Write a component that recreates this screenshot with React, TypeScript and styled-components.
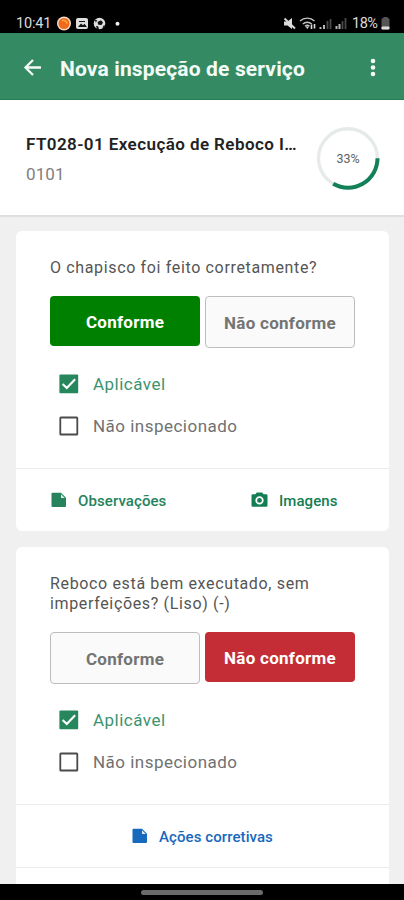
import React from "react";
import styled, { createGlobalStyle } from "styled-components";

const GlobalStyle = createGlobalStyle`
  *, *::before, *::after { box-sizing: border-box; }
  body { margin: 0; background: #f0f0f0; font-family: Roboto, "Liberation Sans", sans-serif; }
  button { font: inherit; border: 0; background: none; padding: 0; }
`;

const Screen = styled.div`
  width: 404px;
  height: 900px;
  display: flex;
  flex-direction: column;
  overflow: hidden;
  background: #f0f0f0;
`;

const StatusBar = styled.div`
  flex: none;
  height: 33px;
  padding: 12px 14px 0 16px;
  display: flex;
  justify-content: space-between;
  background: #000;
  color: #dcdcdc;
`;

const StatusGroup = styled.div<{ $gap: number }>`
  height: 22px;
  display: flex;
  align-items: center;
  gap: ${(p) => p.$gap}px;
  svg { display: block; }
`;

const Clock = styled.span`
  width: 35px;
  margin-right: 1px;
  font-size: 14.5px;
  letter-spacing: -0.2px;
  white-space: nowrap;
`;

const Battery = styled.span`
  width: 27px;
  margin-left: 1px;
  font-size: 14.5px;
  letter-spacing: -0.5px;
  white-space: nowrap;
`;

const AppBar = styled.header`
  flex: none;
  height: 67px;
  padding: 4px 21px 0 20px;
  display: flex;
  align-items: center;
  background: #348b63;
  border-bottom: 1px solid #2a7b56;
  color: #f4fbf7;
  svg { display: block; }
`;

const Title = styled.h1`
  flex: 1;
  margin: 1px 0 0 14px;
  font-size: 21px;
  line-height: 26px;
  font-weight: 700;
  letter-spacing: 0.15px;
  white-space: nowrap;
`;

const Summary = styled.section`
  flex: none;
  height: 117px;
  padding: 26px 24px 0 26px;
  display: flex;
  justify-content: space-between;
  background: #fff;
  border-bottom: 2px solid #dedfdf;
`;

const ServiceName = styled.div`
  margin-top: 8px;
  font-size: 17px;
  line-height: 20px;
  font-weight: 600;
  letter-spacing: 0.42px;
  color: #222;
  white-space: nowrap;
`;

const ServiceCode = styled.div`
  margin-top: 10px;
  font-size: 17px;
  line-height: 20px;
  letter-spacing: 0.1px;
  color: #808080;
`;

const Cards = styled.main`
  flex: 1;
  min-height: 0;
  overflow: hidden;
  padding: 14px 15px 0 16px;
  display: flex;
  flex-direction: column;
  gap: 16px;
`;

const Card = styled.article<{ $open?: boolean }>`
  flex: none;
  background: #fff;
  border-radius: ${(p) => (p.$open ? "6px 6px 0 0" : "6px")};
  min-height: ${(p) => (p.$open ? "350px" : "0")};
`;

const CardBody = styled.div<{ $height: number }>`
  height: ${(p) => p.$height}px;
  padding: 27px 34px 0;
`;

const Question = styled.p`
  margin: 0 -10px 18px 0;
  font-size: 16px;
  line-height: 20px;
  letter-spacing: 0.65px;
  color: #555;
`;

const Choices = styled.div`
  height: 52px;
  display: grid;
  grid-template-columns: 150px 150px;
  column-gap: 5px;
  align-items: start;
`;

type Tone = "green" | "red" | "plain";
const fills: Record<Tone, string> = { green: "#008000", red: "#c42d36", plain: "#fafafa" };

const Choice = styled.button<{ $tone: Tone }>`
  height: ${(p) => (p.$tone === "plain" ? 52 : 50)}px;
  padding-top: 1px;
  border-radius: 4px;
  border: ${(p) => (p.$tone === "plain" ? "1px solid #bdbdbd" : "0")};
  background: ${(p) => fills[p.$tone]};
  color: ${(p) => (p.$tone === "plain" ? "#747474" : "#fff")};
  font-size: 17px;
  font-weight: 700;
  letter-spacing: 0.27px;
`;

const CheckRow = styled.label<{ $on?: boolean }>`
  height: 42px;
  padding-left: 9px;
  display: flex;
  align-items: center;
  gap: 14px;
  font-size: 17px;
  letter-spacing: 0.48px;
  color: ${(p) => (p.$on ? "#3c9470" : "#717171")};
  svg { display: block; flex: none; }
`;

const Checks = styled.div`
  margin-top: 15px;
`;

const Actions = styled.div<{ $columns: number }>`
  height: 63px;
  padding-right: ${(p) => (p.$columns === 2 ? 2 : 0)}px;
  display: grid;
  grid-template-columns: repeat(${(p) => p.$columns}, 1fr);
  border-top: 1px solid #e9ecec;
`;

const Action = styled.button<{ $color: string }>`
  padding-top: 2px;
  display: flex;
  align-items: center;
  justify-content: center;
  gap: 11px;
  color: ${(p) => p.$color};
  font-size: 15px;
  font-weight: 500;
  letter-spacing: 0.08px;
  white-space: nowrap;
  svg { display: block; flex: none; margin-top: -2px; }
`;

const NavBar = styled.footer`
  flex: none;
  height: 16px;
  padding-top: 6px;
  display: flex;
  justify-content: center;
  background: #000;
`;

const Handle = styled.div`
  width: 122px;
  height: 5px;
  border-radius: 3px;
  background: #6b6b6b;
`;

const NoteIcon = () => (
  <svg width="16" height="16" viewBox="0 0 16 16">
    <path d="M1.5 .7H10l5 5V14a1 1 0 0 1-1 1H1.5a1 1 0 0 1-1-1V1.7a1 1 0 0 1 1-1Z" fill="currentColor" />
    <path d="M10 2.2V6h3.8Z" fill="#fff" opacity=".85" />
  </svg>
);

const CameraIcon = () => (
  <svg width="17" height="16" viewBox="0 0 17 16">
    <path
      fill="currentColor"
      d="M5.8.6h5.4l1.4 1.6h2.6a1.3 1.3 0 0 1 1.3 1.3v10a1.3 1.3 0 0 1-1.3 1.3H1.8A1.3 1.3 0 0 1 .5 13.500v-10a1.300 1.300 0 0 1 1.300-1.300h2.600Z"
    />
    <circle cx="8.500" cy="8.400" r="3.300" fill="none" stroke="#fff" strokeWidth="1.700" />
  </svg>
);

const CheckIcon = ({ on }: { on?: boolean }) => (
  <svg width="20" height="20" viewBox="0 0 20 20">
    {on ? (
      <>
        <rect x=".4" y=".4" width="18.800" height="18.800" rx="1" fill="#26865c" />
        <path d="M3.600 10 7.800 14 16.100 5.200" fill="none" stroke="#fff" strokeWidth="2.100" />
      </>
    ) : (
      <rect x="1.300" y="1.500" width="17" height="17" rx=".6" fill="none" stroke="#4a4a4a" strokeWidth="1.800" />
    )}
  </svg>
);

const BackIcon = () => (
  <svg width="26" height="24" viewBox="0 0 26 24">
    <path d="M21 11.500H6M13 4 5.500 11.500 13 19" fill="none" stroke="currentColor" strokeWidth="2.300" />
  </svg>
);

const MoreIcon = () => (
  <svg width="20" height="24" viewBox="0 0 20 24">
    <circle cx="10" cy="5" r="2.300" fill="currentColor" />
    <circle cx="10" cy="11.500" r="2.300" fill="currentColor" />
    <circle cx="10" cy="18" r="2.300" fill="currentColor" />
  </svg>
);

const StatusLeftIcons = () => (
  <svg width="68" height="18" viewBox="0 0 68 18">
    <circle cx="12" cy="9.500" r="7" fill="#f3dccb" />
    <circle cx="12" cy="9.500" r="5.500" fill="#f06a1c" />
    <path d="M10 6.500a4 4 0 0 1 5 3" stroke="#ffab40" strokeWidth="1.500" fill="none" />
    <rect x="24" y="4" width="12" height="11" rx="2" fill="#dedede" />
    <path d="M26 13 29 9.500l2 1.800 1.500-1.500L35 13ZM27 7h6v1h-6Z" fill="#111" />
    <circle cx="47.500" cy="9.500" r="5.800" fill="#dedede" />
    <path d="m49 6.200 2 2.300-1.500 2.500-3.200-.3-.8-2.800ZM42.800 6l2.400.2-1.400 2.400ZM44 12l2 .3 1 2.500-2 .2ZM51.500 11.500l1.600-.3-1 2.500-1.600.2Z" fill="#111" />
    <circle cx="65.500" cy="9.800" r="2" fill="#eee" />
  </svg>
);

const StatusRightIcons = () => (
  <svg width="66" height="18" viewBox="0 0 66 18">
    <path d="M1 7.500h3.500L9 4v11l-4.500-3.500H1Z" fill="#dcdcdc" />
    <path d="m1.500 4.500 10.500 10" stroke="#dcdcdc" strokeWidth="1.800" />
    <path d="M19.800 10a6.500 6.500 0 0 1 8.900 0M22 12.200a3.300 3.300 0 0 1 4.500 0M17 7a10.500 10.500 0 0 1 14.500 0" fill="none" stroke="#c2c2c2" strokeWidth="1.400" />
    <path d="m22.500 12.500 1.800 2.500 1.800-2.500Z" fill="#dcdcdc" />
    <path d="M28.500 15v-4.500M31.500 10v4.500" stroke="#dcdcdc" strokeWidth="1.600" />
    <path d="M37.500 15v-2M41 15v-4M53.500 15v-3M56.500 15v-5" stroke="#b4b4b4" strokeWidth="2" />
    <path d="M44.500 15V7M47.500 15V5M59.500 15V7M62.500 15V4" stroke="#494949" strokeWidth="1.800" />
  </svg>
);

const BatteryIcon = () => (
  <svg width="9" height="14" viewBox="0 0 9 14">
    <rect x="2.500" y="1" width="4" height="2" fill="#555" />
    <rect x=".5" y="2" width="8" height="11.500" rx="1.500" fill="#555" />
    <rect x=".5" y="10.500" width="8" height="3" rx="1" fill="#ddd" />
  </svg>
);

const ProgressRing = () => (
  <svg width="64" height="66" viewBox="0 0 64 66">
    <circle cx="32" cy="32.300" r="29.500" fill="none" stroke="#e6eae9" strokeWidth="3.400" />
    <path d="M61.500 32.300A29.500 29.500 0 0 1 17.200 57.800" fill="none" stroke="#138058" strokeWidth="4" />
    <text x="32" y="36.800" textAnchor="middle" fontFamily="Roboto, sans-serif" fontSize="12.500" fontWeight="400" fill="#616161">
      33%
    </text>
  </svg>
);

type InspectionProps = { question: string; answer: "ok" | "fail" };

const Inspection = ({ question, answer }: InspectionProps) => (
  <>
    <Question>{question}</Question>
    <Choices>
      <Choice $tone={answer === "ok" ? "green" : "plain"}>Conforme</Choice>
      <Choice $tone={answer === "fail" ? "red" : "plain"}>Não conforme</Choice>
    </Choices>
    <Checks>
      <CheckRow $on>
        <CheckIcon on />
        Aplicável
      </CheckRow>
      <CheckRow>
        <CheckIcon />
        Não inspecionado
      </CheckRow>
    </Checks>
  </>
);

export default function App() {
  return (
    <Screen>
      <GlobalStyle />
      <StatusBar>
        <StatusGroup $gap={0}>
          <Clock>10:41</Clock>
          <StatusLeftIcons />
        </StatusGroup>
        <StatusGroup $gap={2}>
          <StatusRightIcons />
          <Battery>18%</Battery>
          <BatteryIcon />
        </StatusGroup>
      </StatusBar>
      <AppBar>
        <BackIcon />
        <Title>Nova inspeção de serviço</Title>
        <MoreIcon />
      </AppBar>
      <Summary>
        <div>
          <ServiceName>FT028-01 Execução de Reboco I…</ServiceName>
          <ServiceCode>0101</ServiceCode>
        </div>
        <ProgressRing />
      </Summary>
      <Cards>
        <Card>
          <CardBody $height={237}>
            <Inspection question="O chapisco foi feito corretamente?" answer="ok" />
          </CardBody>
          <Actions $columns={2}>
            <Action $color="#26835c">
              <NoteIcon />
              Observações
            </Action>
            <Action $color="#137e54">
              <CameraIcon />
              Imagens
            </Action>
          </Actions>
        </Card>
        <Card $open>
          <CardBody $height={257}>
            <Inspection question="Reboco está bem executado, sem imperfeições? (Liso) (-)" answer="fail" />
          </CardBody>
          <Actions $columns={1}>
            <Action $color="#1769bd">
              <NoteIcon />
              Ações corretivas
            </Action>
          </Actions>
          <Actions $columns={2} />
        </Card>
      </Cards>
      <NavBar>
        <Handle />
      </NavBar>
    </Screen>
  );
}
